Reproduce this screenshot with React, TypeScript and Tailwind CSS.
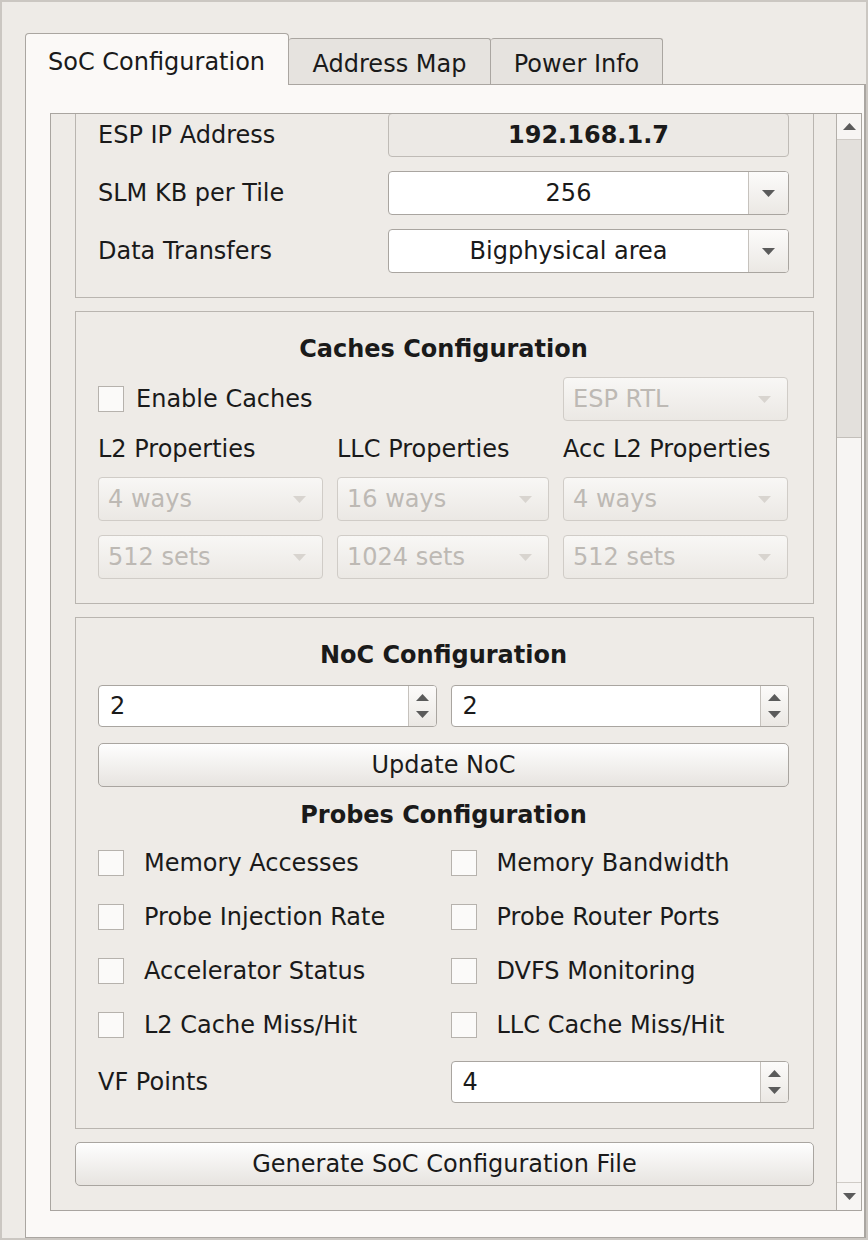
import React from "react";

const Down = ({ color = "#5b5b5b" }: { color?: string }) => (
  <svg width="13" height="7" viewBox="0 0 13 7">
    <polygon points="0,0 13,0 6.5,7" fill={color} />
  </svg>
);

const Up = ({ color = "#5b5b5b" }: { color?: string }) => (
  <svg width="13" height="7" viewBox="0 0 13 7">
    <polygon points="0,7 13,7 6.5,0" fill={color} />
  </svg>
);

function Combo({ value }: { value: string }) {
  return (
    <div className="flex h-[44px] rounded-[4px] border border-[#a9a5a0] bg-white overflow-hidden">
      <div className="flex-1 flex items-center justify-center">{value}</div>
      <div className="w-[40px] border-l border-[#c6c2bd] bg-linear-to-b from-[#fcfbfa] to-[#ebe8e4] flex items-center justify-center">
        <Down />
      </div>
    </div>
  );
}

function DisabledCombo({ value }: { value: string }) {
  return (
    <div className="flex items-center justify-between h-[44px] rounded-[4px] border border-[#d0ccc7] bg-linear-to-b from-[#f8f7f5] to-[#ebe8e4] pl-[9px] pr-[16px] text-[#bdb9b4]">
      <span>{value}</span>
      <Down color="#d8d4cf" />
    </div>
  );
}

function SpinBox({ value }: { value: string }) {
  return (
    <div className="flex h-[42px] rounded-[4px] border border-[#a9a5a0] bg-white overflow-hidden">
      <div className="flex-1 flex items-center pl-[11px]">{value}</div>
      <div className="w-[28px] border-l border-[#c6c2bd] bg-linear-to-b from-[#fcfbfa] to-[#ebe8e4] flex flex-col items-center justify-center gap-[10px]">
        <Up />
        <Down />
      </div>
    </div>
  );
}

function Button({ label }: { label: string }) {
  return (
    <div className="flex items-center justify-center h-[44px] rounded-[5px] border border-[#a9a5a0] bg-linear-to-b from-[#fefefe] to-[#e7e4e0]">
      {label}
    </div>
  );
}

const Box = () => <div className="w-[26px] h-[26px] shrink-0 border border-[#b6b2ad] bg-[#fbfaf9]" />;

function Check({ label }: { label: string }) {
  return (
    <div className="flex items-center gap-[20px] h-[40px]">
      <Box />
      <span>{label}</span>
    </div>
  );
}

const probes = [
  "Memory Accesses",
  "Memory Bandwidth",
  "Probe Injection Rate",
  "Probe Router Ports",
  "Accelerator Status",
  "DVFS Monitoring",
  "L2 Cache Miss/Hit",
  "LLC Cache Miss/Hit",
];

export default function App() {
  return (
    <div className="w-[868px] h-[1240px] overflow-hidden bg-[#eeebe7] border-2 border-[#cbc7c2] flex flex-col pl-[23px] pt-[31px] font-['DejaVu_Sans',sans-serif] text-[24px] leading-[28px] text-[#1a1a1a]">
      {/* tabs */}
      <div className="flex items-end h-[51px] shrink-0">
        <div className="relative z-10 h-[52px] -mb-px w-[264px] rounded-t-[4px] border border-b-0 border-[#aaa6a1] bg-[#fbf9f7] pl-[22px] pt-[14px]">
          SoC Configuration
        </div>
        <div className="h-[46px] w-[202px] rounded-t-[3px] border border-l-0 border-b-0 border-[#aaa6a1] bg-[#e6e3df] flex items-center justify-center pt-[4px]">
          Address Map
        </div>
        <div className="h-[46px] w-[172px] rounded-t-[3px] border border-l-0 border-b-0 border-[#aaa6a1] bg-[#e6e3df] flex items-center justify-center pt-[4px]">
          Power Info
        </div>
      </div>

      {/* pane */}
      <div className="flex-1 flex flex-col border border-r-2 border-[#aaa6a1] bg-[#fbf9f7] pt-[28px] pl-[24px] pr-[2px] pb-[26px]">
        <div className="flex-1 flex border border-[#a9a5a0] overflow-hidden">
          <div className="flex-1 overflow-hidden bg-[#eeebe7]">
            <div className="flex flex-col gap-[13px] pl-[24px] pr-[22px] -mt-px">
              {/* group 1 (scrolled) */}
              <div className="border border-t-0 border-[#b9b5b0] pl-[22px] pr-[24px] pb-[24px] flex flex-col gap-[14px]">
                <div className="flex items-center">
                  <div className="w-[290px]">ESP IP Address</div>
                  <div className="flex-1 h-[44px] rounded-[4px] border border-[#bfbbb6] bg-[#ece9e5] flex items-center justify-center font-bold">
                    192.168.1.7
                  </div>
                </div>
                <div className="flex items-center">
                  <div className="w-[290px]">SLM KB per Tile</div>
                  <div className="flex-1">
                    <Combo value="256" />
                  </div>
                </div>
                <div className="flex items-center">
                  <div className="w-[290px]">Data Transfers</div>
                  <div className="flex-1">
                    <Combo value="Bigphysical area" />
                  </div>
                </div>
              </div>

              {/* caches */}
              <div className="border border-[#b9b5b0] pl-[22px] pr-[24px] pt-[23px] pb-[24px] flex flex-col gap-[14px]">
                <div className="text-center font-bold">Caches Configuration</div>
                <div className="grid grid-cols-[225px_212px_225px] gap-x-[14px] items-center">
                  <div className="col-span-2 flex items-center gap-[12px]">
                    <Box />
                    <span>Enable Caches</span>
                  </div>
                  <DisabledCombo value="ESP RTL" />
                </div>
                <div className="grid grid-cols-[225px_212px_225px] gap-x-[14px] gap-y-[14px]">
                  <div>L2 Properties</div>
                  <div>LLC Properties</div>
                  <div>Acc L2 Properties</div>
                  <DisabledCombo value="4 ways" />
                  <DisabledCombo value="16 ways" />
                  <DisabledCombo value="4 ways" />
                  <DisabledCombo value="512 sets" />
                  <DisabledCombo value="1024 sets" />
                  <DisabledCombo value="512 sets" />
                </div>
              </div>

              {/* noc */}
              <div className="border border-[#b9b5b0] pl-[22px] pr-[24px] pt-[23px] pb-[25px] flex flex-col">
                <div className="text-center font-bold">NoC Configuration</div>
                <div className="grid grid-cols-2 gap-x-[14px] mt-[16px]">
                  <SpinBox value="2" />
                  <SpinBox value="2" />
                </div>
                <div className="mt-[16px]">
                  <Button label="Update NoC" />
                </div>
                <div className="text-center font-bold mt-[14px]">Probes Configuration</div>
                <div className="grid grid-cols-2 gap-x-[14px] gap-y-[14px] mt-[14px]">
                  {probes.map((p) => (
                    <Check key={p} label={p} />
                  ))}
                </div>
                <div className="grid grid-cols-2 gap-x-[14px] items-center mt-[16px]">
                  <div>VF Points</div>
                  <SpinBox value="4" />
                </div>
              </div>

              <Button label="Generate SoC Configuration File" />
            </div>
          </div>

          {/* scrollbar */}
          <div className="w-[25px] flex flex-col border-l border-[#b3afaa] bg-[#f7f5f3]">
            <div className="h-[26px] flex items-center justify-center border-b border-[#cfcbc6]">
              <Up />
            </div>
            <div className="h-[298px] bg-[#e3e0dc] border-b border-[#c3bfba]" />
            <div className="flex-1" />
            <div className="h-[28px] flex items-center justify-center border-t border-[#cfcbc6]">
              <Down />
            </div>
          </div>
        </div>
      </div>
    </div>
  );
}
